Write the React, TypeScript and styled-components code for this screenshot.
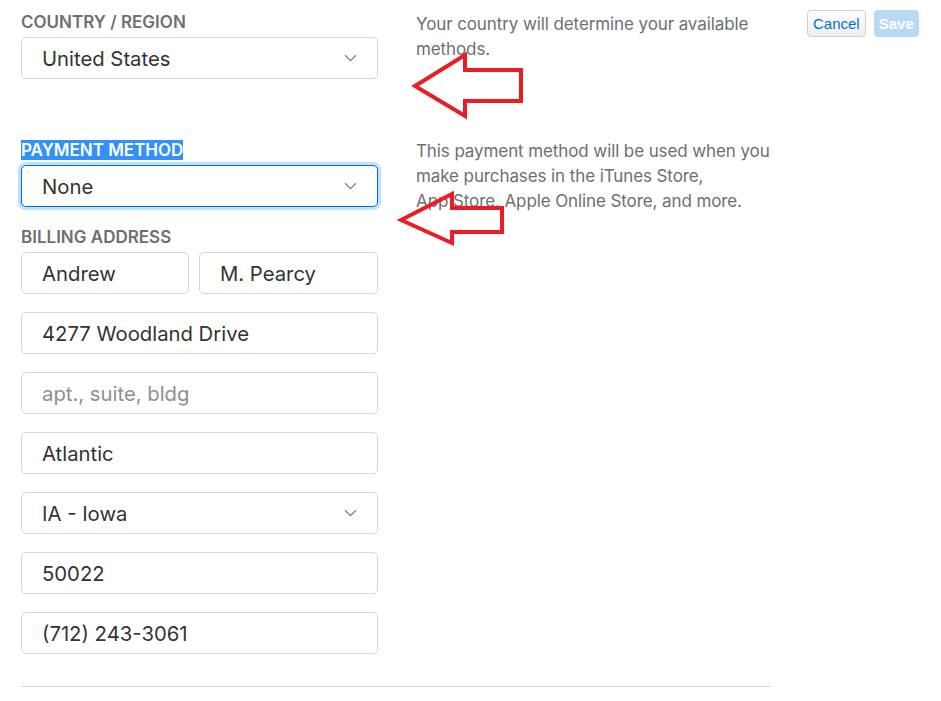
import React from "react";
import styled, { createGlobalStyle } from "styled-components";

const Global = createGlobalStyle`
  html, body { margin: 0; padding: 0; background: #fff; }
  body { font-family: "Inter", "Liberation Sans", sans-serif; -webkit-font-smoothing: antialiased; }
  * { box-sizing: border-box; }
`;

const Page = styled.div`
  position: relative;
  width: 941px;
  height: 701px;
  padding: 12px 0 0 21px;
  overflow: hidden;
`;

const Layout = styled.div`
  display: grid;
  grid-template-columns: 357px 355px 1fr;
  column-gap: 38px;
  align-items: start;
`;

const Column = styled.div`
  display: flex;
  flex-direction: column;
`;

const Section = styled.div<{ $mt?: number }>`
  display: flex;
  flex-direction: column;
  margin-top: ${(p) => p.$mt ?? 0}px;
`;

const Label = styled.div`
  font-size: 17px;
  line-height: 19px;
  font-weight: 600;
  color: #6e6e73;
  text-transform: uppercase;
  margin-bottom: 5px;
  padding-top: 1px;
`;

const Selected = styled.span`
  background: #3391fd;
  color: #fff;
`;

const Field = styled.div<{ $focus?: boolean; $placeholder?: boolean }>`
  position: relative;
  height: 42px;
  border: 1px solid ${(p) => (p.$focus ? "#0070c9" : "#d6d6d6")};
  border-radius: 5px;
  box-shadow: ${(p) => (p.$focus ? "0 0 0 3px rgba(131, 192, 253, 0.5)" : "none")};
  display: flex;
  align-items: center;
  padding: 0 20px;
  font-size: 20.3px;
  color: ${(p) => (p.$placeholder ? "#8e8e93" : "#333")};
  background: #fff;
`;

const FieldText = styled.span`
  flex: 1;
  white-space: nowrap;
`;

const Fields = styled.div`
  display: flex;
  flex-direction: column;
  gap: 18px;
`;

const NameRow = styled.div`
  display: grid;
  grid-template-columns: 168px 1fr;
  gap: 10px;
`;

const Desc = styled.p<{ $mt?: number }>`
  margin: ${(p) => p.$mt ?? 0}px 0 0 0;
  font-size: 17px;
  letter-spacing: -0.1px;
  line-height: 25px;
  color: #6e6e73;
`;

const Buttons = styled.div`
  display: flex;
  gap: 8px;
  margin-top: -2px;
  margin-left: -2px;
`;

const Button = styled.button<{ $primary?: boolean }>`
  height: 27px;
  padding: 0 ${(p) => (p.$primary ? 4 : 5)}px;
  border-radius: 4px;
  font-family: "Liberation Sans", Arial, sans-serif;
  font-size: 15px;
  ${(p) =>
    p.$primary
      ? `background: #b8d8f5; border: 1px solid #b8d8f5; color: #fff; font-weight: 700;`
      : `background: linear-gradient(#ffffff, #eeeeee); border: 1px solid #cfcfcf; color: #0070c9;`}
`;

const Divider = styled.div`
  width: 750px;
  height: 1px;
  background: #d6d6d6;
  margin-top: 32px;
`;

const Annotation = styled.svg`
  position: absolute;
  left: 0;
  top: 0;
  pointer-events: none;
`;

const Chevron = () => (
  <svg width="13" height="8" viewBox="0 0 13 8">
    <path d="M1 1.2 L6.5 6.5 L12 1.2" fill="none" stroke="#86868b" strokeWidth="1.3" />
  </svg>
);

const Select = ({ value, focus }: { value: string; focus?: boolean }) => (
  <Field $focus={focus}>
    <FieldText>{value}</FieldText>
    <Chevron />
  </Field>
);

export default function App() {
  return (
    <Page>
      <Global />
      <Layout>
        <Column>
          <Section>
            <Label>Country / Region</Label>
            <Select value="United States" />
          </Section>
          <Section $mt={61}>
            <Label>
              <Selected>Payment Method</Selected>
            </Label>
            <Select value="None" focus />
          </Section>
          <Section $mt={20}>
            <Label>Billing Address</Label>
            <Fields>
              <NameRow>
                <Field><FieldText>Andrew</FieldText></Field>
                <Field><FieldText>M. Pearcy</FieldText></Field>
              </NameRow>
              <Field><FieldText>4277 Woodland Drive</FieldText></Field>
              <Field $placeholder><FieldText>apt., suite, bldg</FieldText></Field>
              <Field><FieldText>Atlantic</FieldText></Field>
              <Select value="IA - Iowa" />
              <Field><FieldText>50022</FieldText></Field>
              <Field><FieldText>(712) 243-3061</FieldText></Field>
            </Fields>
          </Section>
          <Divider />
        </Column>
        <Column>
          <Desc>Your country will determine your available methods.</Desc>
          <Desc $mt={77}>
            This payment method will be used when you make purchases in the iTunes Store, App{"\u00a0"}Store, Apple
            Online Store, and more.
          </Desc>
        </Column>
        <Buttons>
          <Button>Cancel</Button>
          <Button $primary>Save</Button>
        </Buttons>
      </Layout>
      <Annotation width="941" height="701" viewBox="0 0 941 701">
        <path
          d="M415 86 L465 55 L465 70 L521 70 L521 101 L465 101 L465 116 Z"
          fill="none"
          stroke="#ec1c24"
          strokeWidth="4"
          strokeLinejoin="miter"
        />
        <path
          d="M401 220 L452 194 L452 208 L502 208 L502 232 L452 232 L452 243 Z"
          fill="none"
          stroke="#ec1c24"
          strokeWidth="4"
          strokeLinejoin="miter"
        />
      </Annotation>
    </Page>
  );
}
